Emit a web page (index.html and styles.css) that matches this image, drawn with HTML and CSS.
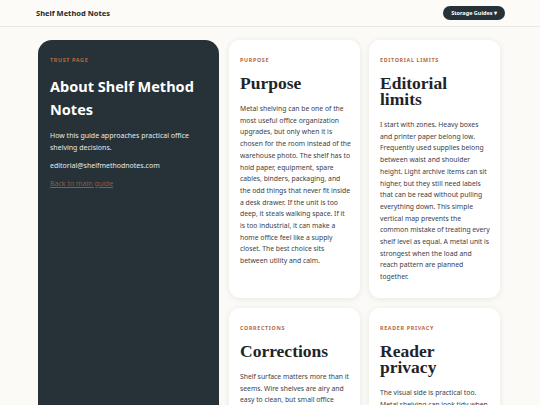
FILE: index.html
```html
<!DOCTYPE html>
<html lang="en">
<head>
<meta charset="utf-8">
<title>About Shelf Method Notes</title>
<link rel="stylesheet" href="styles.css">
</head>
<body>
<header class="topbar">
  <a class="brand" href="#">Shelf Method Notes</a>
  <button class="menu-btn" type="button">Storage Guides ▾</button>
</header>
<main class="layout">
  <aside class="intro">
    <p class="eyebrow">Trust page</p>
    <h1 class="intro-title">About Shelf Method Notes</h1>
    <p class="intro-text">How this guide approaches practical office shelving decisions.</p>
    <p class="intro-text">editorial@shelfmethodnotes.com</p>
    <p class="intro-text"><a class="back-link" href="#">Back to main guide</a></p>
  </aside>
  <section class="card">
    <p class="eyebrow">Purpose</p>
    <h2 class="card-title">Purpose</h2>
    <p class="card-text">Metal shelving can be one of the most useful office organization upgrades, but only when it is chosen for the room instead of the warehouse photo. The shelf has to hold paper, equipment, spare cables, binders, packaging, and the odd things that never fit inside a desk drawer. If the unit is too deep, it steals walking space. If it is too industrial, it can make a home office feel like a supply closet. The best choice sits between utility and calm.</p>
  </section>
  <section class="card">
    <p class="eyebrow">Editorial limits</p>
    <h2 class="card-title">Editorial limits</h2>
    <p class="card-text">I start with zones. Heavy boxes and printer paper belong low. Frequently used supplies belong between waist and shoulder height. Light archive items can sit higher, but they still need labels that can be read without pulling everything down. This simple vertical map prevents the common mistake of treating every shelf level as equal. A metal unit is strongest when the load and reach pattern are planned together.</p>
  </section>
  <section class="card">
    <p class="eyebrow">Corrections</p>
    <h2 class="card-title">Corrections</h2>
    <p class="card-text">Shelf surface matters more than it seems. Wire shelves are airy and easy to clean, but small office items can tip or slip through the gaps unless a liner is added. Solid shelves hold small things well and look calmer in a room.</p>
  </section>
  <section class="card">
    <p class="eyebrow">Reader privacy</p>
    <h2 class="card-title">Reader privacy</h2>
    <p class="card-text">The visual side is practical too. Metal shelving can look tidy when the items on it follow a simple system of boxes, labels and open space between groups.</p>
  </section>
</main>
</body>
</html>
```
FILE: styles.css
```css
* { box-sizing: border-box; }
html, body { margin: 0; padding: 0; }
body {
  background: #fbfaf6;
  font-family: "Noto Sans", "Open Sans", sans-serif;
  color: #3a3f44;
}
.topbar {
  height: 27px;
  display: flex;
  align-items: center;
  justify-content: space-between;
  padding: 0 35px 0 36px;
  border-bottom: 1px solid #ebe9e3;
  background: #fcfbf8;
}
.brand {
  font-size: 7.5px;
  font-weight: 700;
  color: #1f2529;
  text-decoration: none;
}
.menu-btn {
  height: 14px;
  padding: 0 8px;
  border: 0;
  border-radius: 7px;
  background: #263238;
  color: #ffffff;
  font-family: "Noto Sans", sans-serif;
  font-size: 5.5px;
  font-weight: 700;
}
.layout {
  display: grid;
  grid-template-columns: 182px 131px 131px;
  column-gap: 9px;
  row-gap: 10px;
  padding: 13px 0 0 38px;
}
.intro {
  grid-row: 1 / span 3;
  background: #263238;
  border-radius: 14px 14px 0 0;
  padding: 16px 12px;
  color: #e9ecee;
  min-height: 420px;
  margin-right: 1px;
}
.eyebrow {
  margin: 0;
  font-size: 5.4px;
  font-weight: 700;
  letter-spacing: 0.12em;
  text-transform: uppercase;
  color: #b8693f;
  line-height: 8px;
}
.intro-title {
  margin: 11px 0 9px;
  font-size: 14.5px;
  line-height: 23px;
  font-weight: 700;
  color: #ffffff;
}
.intro-text {
  margin: 0 0 6.5px;
  font-size: 7px;
  line-height: 11.5px;
  color: #e6e9eb;
}
.back-link {
  color: #8d5b44;
  text-decoration: underline;
}
.card {
  background: #ffffff;
  border-radius: 11px;
  padding: 16px 9px 15px 11px;
  box-shadow: 0 1px 6px rgba(40, 35, 25, 0.09);
}
.card-title {
  margin: 11px 0 12px;
  font-family: "Liberation Serif", "Times New Roman", serif;
  font-size: 17.5px;
  line-height: 16px;
  font-weight: 700;
  color: #1f2428;
}
.card-text {
  margin: 0;
  font-size: 6.8px;
  line-height: 11.7px;
  color: #3b4045;
}
```
